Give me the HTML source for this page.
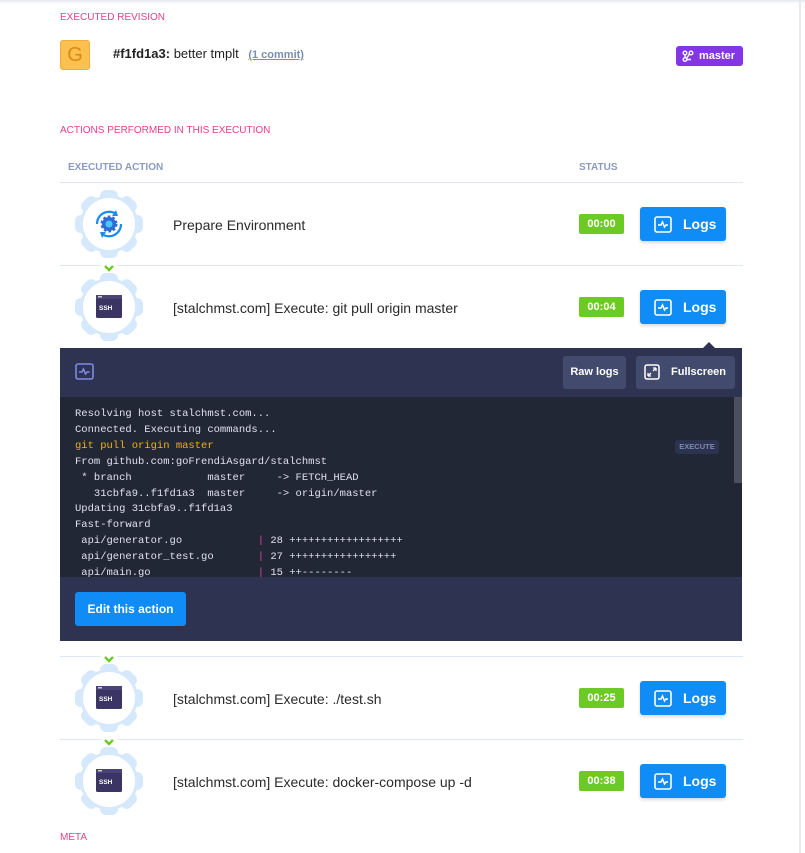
<!DOCTYPE html>
<html><head><meta charset="utf-8"><style>
*{box-sizing:border-box;margin:0;padding:0}
body{width:805px;height:853px;overflow:hidden;background:#fff;font-family:"Liberation Sans",sans-serif;position:relative;color:#222}
.abs{position:absolute}
.lbl{font-size:10px;color:#e83e8c;letter-spacing:0}
.hdr{font-size:10px;color:#8a9ac0;font-weight:bold}
.line{position:absolute;left:60px;width:683px;height:1px;background:#dce8f8}
.title{position:absolute;left:173px;font-size:14px;color:#2a2a2a}
.badge{position:absolute;left:579px;width:45px;height:20px;background:#6bcb24;color:#fff;font-size:11px;font-weight:bold;border-radius:2px;text-align:center;line-height:20px}
.logs{position:absolute;left:640px;width:86px;height:34px;background:#0f8cf5;border-radius:3px;color:#fff;font-weight:bold;font-size:14px;box-shadow:0 2px 3px rgba(0,0,0,.15)}
.logs svg{position:absolute;left:14px;top:9px}
.logs span{position:absolute;left:43px;top:9px}
.gear{position:absolute;left:75px;width:68px;height:68px}
.chev{position:absolute;left:101px;width:16px;height:10px;background:#fff}
pre{font-family:"Liberation Mono",monospace;font-size:10.5px;line-height:15.9px;color:#dde2ec}
</style></head><body>
<div class="abs" style="left:0;top:0;width:805px;height:4px;background:linear-gradient(#e4e8ef,#fff)"></div>
<div class="abs" style="left:799px;top:0;width:2px;height:853px;background:#e7e9ee"></div>

<div class="abs lbl" style="left:60px;top:12px">EXECUTED REVISION</div>
<div class="abs" style="left:60px;top:40px;width:30px;height:30px;background:#fbc04f;border:1px solid #f0ad3a;border-radius:3px;color:#d98a10;font-size:20px;text-align:center;line-height:28px">G</div>
<div class="abs" style="left:113px;top:46px;font-size:13px;color:#222"><b>#f1fd1a3:</b> better tmplt <span style="margin-left:6px;font-size:11px;color:#7a8db3;text-decoration:underline;font-weight:bold">(1 commit)</span></div>
<div class="abs" style="left:676px;top:46px;width:67px;height:20px;background:#8436e6;border-radius:3px;color:#fff;font-size:11px;font-weight:bold;line-height:20px">
<svg class="abs" style="left:6px;top:4px" width="12" height="12" viewBox="0 0 12 12" fill="none" stroke="#fff" stroke-width="1.4"><circle cx="3" cy="3" r="1.8"/><circle cx="9" cy="3" r="1.8"/><circle cx="3" cy="9.5" r="1.8"/><path d="M3 5v2.7M7.5 4 4.5 8.5M4.8 9.5H9"/></svg>
<span style="position:absolute;left:23px">master</span></div>

<div class="abs lbl" style="left:60px;top:125px">ACTIONS PERFORMED IN THIS EXECUTION</div>
<div class="abs hdr" style="left:68px;top:162px">EXECUTED ACTION</div>
<div class="abs hdr" style="left:579px;top:162px">STATUS</div>

<svg width="0" height="0" style="position:absolute"><defs>
<g id="gr"><g fill="#d6e9fc">
<circle cx="34" cy="34" r="29"/>
<rect x="25" y="0" width="18" height="68" rx="6"/>
<rect x="25" y="0" width="18" height="68" rx="6" transform="rotate(45 34 34)"/>
<rect x="25" y="0" width="18" height="68" rx="6" transform="rotate(90 34 34)"/>
<rect x="25" y="0" width="18" height="68" rx="6" transform="rotate(135 34 34)"/></g>
<circle cx="34" cy="34" r="26" fill="#fff"/></g>
<g id="ssh"><rect x="21" y="22" width="26" height="23" rx="1.5" fill="#3b3563"/><rect x="21" y="22" width="26" height="4" fill="#4b4477"/><rect x="23" y="23" width="4" height="1.5" fill="#ccc"/><text x="24" y="37" font-family="Liberation Sans" font-size="6.5" font-weight="bold" fill="#fff">SSH</text></g>
<g id="lg"><rect x="1" y="1" width="16" height="15" rx="2" fill="none" stroke="#fff" stroke-width="1.6"/><path d="M4 9h3l1.5-3 2 5 1.5-2h2" fill="none" stroke="#fff" stroke-width="1.5"/></g>
</defs></svg>

<div class="line" style="top:182px"></div>
<svg class="gear" style="top:190px" viewBox="0 0 68 68"><use href="#gr"/>
<path d="M22 34a12 12 0 0 1 19-10" fill="none" stroke="#1a8cf0" stroke-width="2.2"/><path d="M46 34a12 12 0 0 1-19 10" fill="none" stroke="#1a8cf0" stroke-width="2.2"/>
<path d="M41 20l2 6-6 0z M27 48l-2-6 6 0z" fill="#1a8cf0"/>
<circle cx="34" cy="34" r="7" fill="#2f6ad9" stroke="#2f6ad9" stroke-width="3" stroke-dasharray="2.5 2"/><circle cx="34" cy="34" r="3.5" fill="#48c9f5"/></svg>
<div class="title" style="top:217px">Prepare Environment</div>
<div class="badge" style="top:214px">00:00</div>
<div class="logs" style="top:207px"><svg width="18" height="17"><use href="#lg"/></svg><span>Logs</span></div>

<div class="line" style="top:265px"></div>
<svg class="gear" style="top:273px" viewBox="0 0 68 68"><use href="#gr"/><use href="#ssh"/></svg>
<div class="chev" style="top:261px"><svg width="16" height="10"><path d="M4 2l4 4 4-4" fill="none" stroke="#6bcb24" stroke-width="2.4"/></svg></div>
<div class="title" style="top:300px">[stalchmst.com] Execute: git pull origin master</div>
<div class="badge" style="top:297px">00:04</div>
<div class="logs" style="top:290px"><svg width="18" height="17"><use href="#lg"/></svg><span>Logs</span></div>

<div class="abs" style="left:60px;top:348px;width:682px;height:293px;background:#2d3350"></div>
<div class="abs" style="left:702px;top:342px;width:0;height:0;border-left:7px solid transparent;border-right:7px solid transparent;border-bottom:7px solid #2d3350"></div>
<svg class="abs" style="left:75px;top:363px" width="19" height="17"><rect x="1" y="1" width="17" height="15" rx="2" fill="none" stroke="#7d8ae8" stroke-width="1.6"/><path d="M4 9h3l1.5-3 2 5 1.5-2h2.5" fill="none" stroke="#7d8ae8" stroke-width="1.5"/></svg>
<div class="abs" style="left:563px;top:356px;width:63px;height:33px;background:#424a6e;border-radius:3px;color:#fff;font-size:11px;font-weight:bold;text-align:center;line-height:33px">Raw logs</div>
<div class="abs" style="left:636px;top:356px;width:99px;height:33px;background:#424a6e;border-radius:3px;color:#fff;font-size:11px;font-weight:bold;line-height:33px"><svg class="abs" style="left:8px;top:8px" width="16" height="16"><rect x="1" y="1" width="14" height="14" rx="2" fill="none" stroke="#fff" stroke-width="1.5"/><path d="M4 12l3-3M4 12v-3M4 12h3M12 4l-3 3M12 4v3M12 4h-3" stroke="#fff" stroke-width="1.3" fill="none"/></svg><span style="position:absolute;left:35px">Fullscreen</span></div>
<div class="abs" style="left:60px;top:397px;width:682px;height:180px;background:#222736;overflow:hidden">
<pre style="position:absolute;left:15px;top:10px">Resolving host stalchmst.com...
Connected. Executing commands...
<span style="color:#f0b20f">git pull origin master</span>
From github.com:goFrendiAsgard/stalchmst
 * branch            master     -> FETCH_HEAD
   31cbfa9..f1fd1a3  master     -> origin/master
Updating 31cbfa9..f1fd1a3
Fast-forward
 api/generator.go            <span style="color:#e040a0">|</span> 28 ++++++++++++++++++
 api/generator_test.go       <span style="color:#e040a0">|</span> 27 +++++++++++++++++
 api/main.go                 <span style="color:#e040a0">|</span> 15 ++--------</pre>
<div class="abs" style="left:615px;top:43px;width:44px;height:14px;background:#2c3350;border-radius:3px;color:#7d89ad;font-size:7.5px;font-weight:bold;text-align:center;line-height:14px">EXECUTE</div>
<div class="abs" style="left:674px;top:0;width:8px;height:86px;background:#4c505c"></div>
</div>
<div class="abs" style="left:75px;top:592px;width:111px;height:34px;background:#0f8cf5;border-radius:3px;color:#fff;font-size:12px;font-weight:bold;text-align:center;line-height:34px">Edit this action</div>

<div class="line" style="top:656px"></div>
<svg class="gear" style="top:664px" viewBox="0 0 68 68"><use href="#gr"/><use href="#ssh"/></svg>
<div class="chev" style="top:652px"><svg width="16" height="10"><path d="M4 2l4 4 4-4" fill="none" stroke="#6bcb24" stroke-width="2.4"/></svg></div>
<div class="title" style="top:691px">[stalchmst.com] Execute: ./test.sh</div>
<div class="badge" style="top:688px">00:25</div>
<div class="logs" style="top:681px"><svg width="18" height="17"><use href="#lg"/></svg><span>Logs</span></div>

<div class="line" style="top:739px"></div>
<svg class="gear" style="top:747px" viewBox="0 0 68 68"><use href="#gr"/><use href="#ssh"/></svg>
<div class="chev" style="top:735px"><svg width="16" height="10"><path d="M4 2l4 4 4-4" fill="none" stroke="#6bcb24" stroke-width="2.4"/></svg></div>
<div class="title" style="top:774px">[stalchmst.com] Execute: docker-compose up -d</div>
<div class="badge" style="top:771px">00:38</div>
<div class="logs" style="top:764px"><svg width="18" height="17"><use href="#lg"/></svg><span>Logs</span></div>

<div class="abs lbl" style="left:60px;top:832px">META</div>
</body></html>
